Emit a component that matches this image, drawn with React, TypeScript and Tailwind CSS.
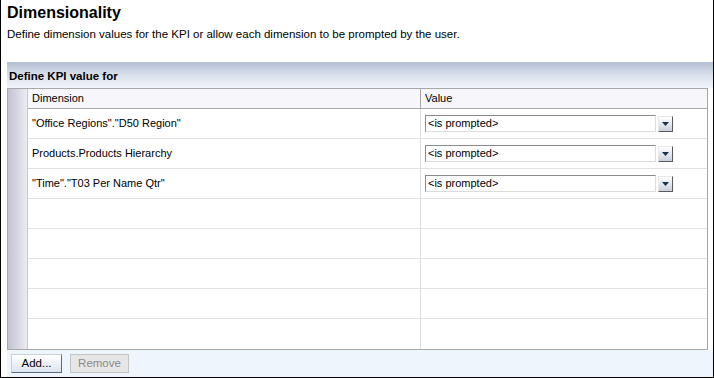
const rows = [
  '"Office Regions"."D50 Region"',
  "Products.Products Hierarchy",
  '"Time"."T03 Per Name Qtr"',
  "",
  "",
  "",
  "",
  "",
];

const Select = () => {
  return (
    <div className="flex items-center gap-[2px]">
      <div className="w-[231px] h-[17px] border border-t-[#8a8a8a] border-l-[#8a8a8a] border-r-[#dcdcdc] border-b-[#dcdcdc] bg-white flex items-center pl-[2px] text-[11px] text-black leading-none">
        {"<is prompted>"}
      </div>
      <div className="w-[15px] h-[16px] border border-t-[#e8e8e8] border-l-[#e8e8e8] border-r-[#5a5a5a] border-b-[#5a5a5a] bg-gradient-to-b from-white to-[#c9d1dd] flex items-center justify-center">
        <svg width="7" height="4" viewBox="0 0 7 4">
          <path d="M0 0 L7 0 L3.5 4 Z" fill="#16324f" />
        </svg>
      </div>
    </div>
  );
};

const App = () => {
  return (
    <div
      className="w-[714px] h-[378px] bg-white border-l border-r border-b border-black flex flex-col text-black"
      style={{ fontFamily: '"Liberation Sans", Arial, sans-serif' }}
    >
      <div className="pl-[6px] pt-[3px] text-[16px] font-bold leading-[20px]">Dimensionality</div>
      <div className="pl-[6px] pt-[4px] text-[11.5px] leading-[14px]">
        Define dimension values for the KPI or allow each dimension to be prompted by the user.
      </div>
      <div className="ml-[6px] mt-[21px] flex-1 flex flex-col">
        <div className="h-[26px] bg-gradient-to-b from-[#b3bfd3] via-[#d9e0eb] to-[#f2f5fa] flex items-center pl-[2px] pt-[3px] text-[11.5px] font-bold">
          Define KPI value for
        </div>
        <div className="mr-[5px] border border-[#a8a8a8] flex">
          <div className="w-[20px] flex flex-col bg-gradient-to-r from-[#c2c2d2] to-[#ececf4] border-r border-[#c8c8d0]" />
          <div className="flex-1 flex flex-col">
            <div className="h-[20px] flex bg-[#f7f7fb] border-b border-[#a8a8a8] text-[11px]">
              <div className="w-[393px] border-r border-[#a8a8a8] pl-[4px] flex items-center">Dimension</div>
              <div className="flex-1 pl-[4px] flex items-center">Value</div>
            </div>
            {rows.map((r, i) => (
              <div
                key={i}
                className={`h-[30px] flex text-[11px] ${i < rows.length - 1 ? "border-b border-[#e2e2e2]" : ""}`}
              >
                <div className="w-[393px] border-r border-[#dcdcdc] pl-[4px] flex items-center">{r}</div>
                <div className="flex-1 pl-[4px] flex items-center">{i < 3 && <Select />}</div>
              </div>
            ))}
          </div>
        </div>
        <div className="flex-1 bg-[#eef5fd] flex items-center gap-[8px] pl-[4px]">
          <button className="w-[51px] h-[19px] border border-t-[#c8d0dc] border-l-[#c8d0dc] border-r-[#5c6a80] border-b-[#5c6a80] bg-gradient-to-b from-white to-[#dde4ee] text-[11.5px] leading-none">
            Add...
          </button>
          <button className="w-[59px] h-[19px] border border-[#c4c4c4] bg-[#e6e6e6] text-[11.5px] text-[#8a8a8a] leading-none">
            Remove
          </button>
        </div>
      </div>
    </div>
  );
};

export default App;
